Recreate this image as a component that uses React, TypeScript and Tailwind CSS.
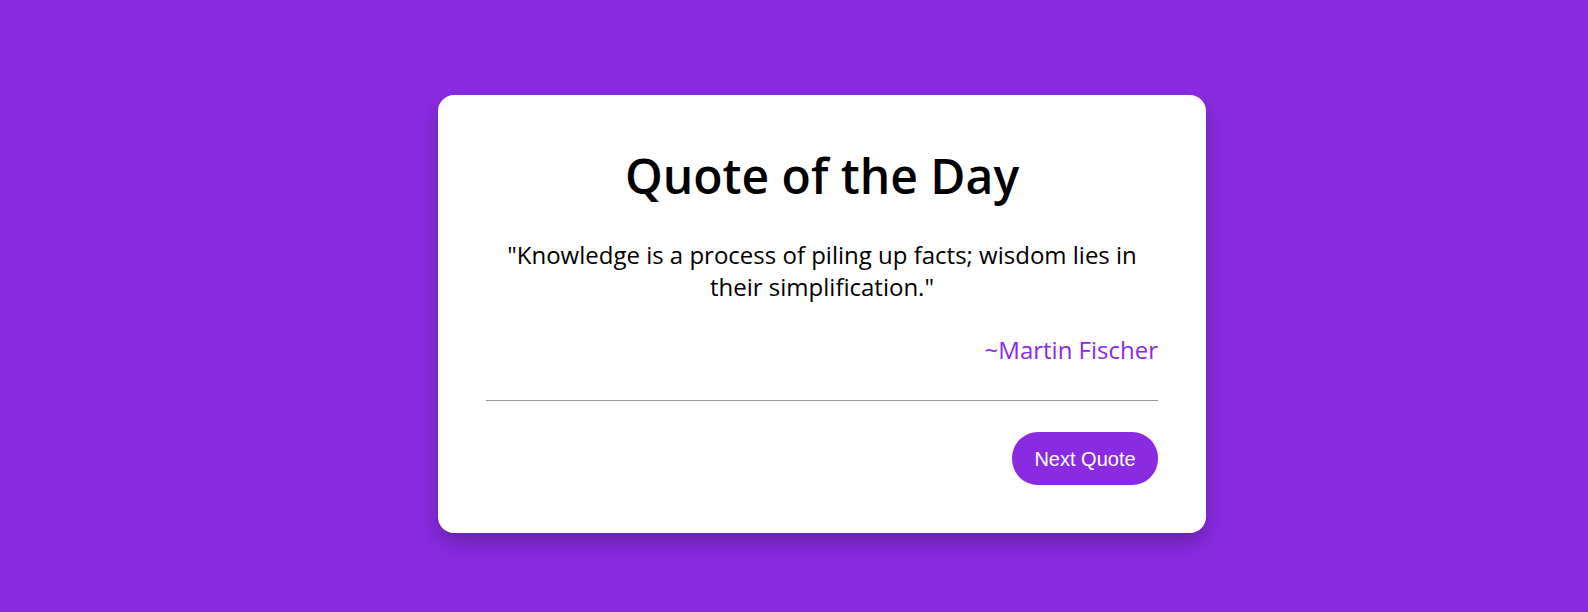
import React, {useState} from 'react';

const quotes = [
    {text: "Knowledge is a process of piling up facts; wisdom lies in their simplification.", author: "Martin Fischer"},
    {text: "The only way to do great work is to love what you do.", author: "Steve Jobs"},
    {text: "Simplicity is the ultimate sophistication.", author: "Leonardo da Vinci"},
];

const App = () => {
    const [index, setIndex] = useState(0);
    const quote = quotes[index];

    const next = () => {
        setIndex((prev) => (prev + 1) % quotes.length);
    };

    return (
        <div className="min-h-screen bg-[#8a2be2] flex justify-center items-center pl-14 pt-4 font-['Open_Sans',sans-serif]">
            <div className="w-[768px] h-[438px] bg-white rounded-2xl shadow-[0_10px_20px_rgba(0,0,0,0.25)] px-12 pt-12 flex flex-col">
                <h1 className="text-[48px] font-semibold text-center text-black leading-[1.36]">Quote of the Day</h1>
                <p className="mt-[31px] text-[24px] leading-[32px] text-center text-black">
                    "{quote.text}"
                </p>
                <p className="mt-[31px] text-[24px] leading-[32px] text-right text-[#8a2be2]">~{quote.author}</p>
                <hr className="mt-[34px] border-t border-[#999]" />
                <div className="flex justify-end mt-[31px]">
                    <button
                        onClick={next}
                        className="h-[53px] w-[146px] rounded-[26px] bg-[#8a2be2] text-white text-[20px] font-['Liberation_Sans',Arial,sans-serif]"
                    >
                        Next Quote
                    </button>
                </div>
            </div>
        </div>
    );
};

export default App;
